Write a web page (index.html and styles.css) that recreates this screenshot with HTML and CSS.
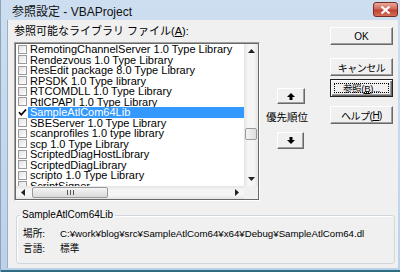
FILE: index.html
```html
<!DOCTYPE html>
<html lang="ja">
<head>
    <meta charset="UTF-8">
    <title>参照設定 - VBAProject</title>
    <link rel="stylesheet" href="styles.css">
</head>
<body>
<div class="window">
    <div class="titlebar">
        <span class="title">参照設定 - VBAProject</span>
        <span class="close">
            <svg width="11" height="8" viewBox="0 0 11 8"><path d="M1.5 0.5L9.5 7.5M9.5 0.5L1.5 7.5" stroke="#fff" stroke-width="2.2"/></svg>
        </span>
    </div>
    <div class="client">
        <div class="main">
            <div class="libs">
                <div class="caption">参照可能なライブラリ ファイル(<u>A</u>):</div>
                <div class="listbox">
                    <ul class="items">
                        <li><i class="chk"></i><span>RemotingChannelServer 1.0 Type Library</span></li>
                        <li><i class="chk"></i><span>Rendezvous 1.0 Type Library</span></li>
                        <li><i class="chk"></i><span>ResEdit package 8.0 Type Library</span></li>
                        <li><i class="chk"></i><span>RPSDK 1.0 Type library</span></li>
                        <li><i class="chk"></i><span>RTCOMDLL 1.0 Type Library</span></li>
                        <li><i class="chk"></i><span>RtlCPAPI 1.0 Type Library</span></li>
                        <li class="sel"><i class="chk on"><svg width="9" height="9" viewBox="0 0 9 9"><path d="M1 4.2L3.3 6.8L8 1.5" fill="none" stroke="#000" stroke-width="1.7"/></svg></i><span>SampleAtlCom64Lib</span></li>
                        <li><i class="chk"></i><span>SBEServer 1.0 Type Library</span></li>
                        <li><i class="chk"></i><span>scanprofiles 1.0 type library</span></li>
                        <li><i class="chk"></i><span>scp 1.0 Type Library</span></li>
                        <li><i class="chk"></i><span>ScriptedDiagHostLibrary</span></li>
                        <li><i class="chk"></i><span>ScriptedDiagLibrary</span></li>
                        <li><i class="chk"></i><span>scripto 1.0 Type Library</span></li>
                        <li><i class="chk"></i><span>ScriptSigner</span></li>
                    </ul>
                    <div class="vscroll">
                        <div class="arrow"><svg width="7" height="4" viewBox="0 0 7 4"><path d="M0 4L3.5 0L7 4Z" fill="#222"/></svg></div>
                        <div class="track"><div class="thumb"></div></div>
                        <div class="arrow"><svg width="7" height="4" viewBox="0 0 7 4"><path d="M0 0L7 0L3.5 4Z" fill="#222"/></svg></div>
                    </div>
                    <div class="hscroll">
                        <div class="arrow"><svg width="4" height="7" viewBox="0 0 4 7"><path d="M4 0L4 7L0 3.5Z" fill="#222"/></svg></div>
                        <div class="track">
                            <div class="thumb">
                                <svg width="7" height="5" viewBox="0 0 7 5"><path d="M0.5 0V5M3.5 0V5M6.5 0V5" stroke="#555" stroke-width="1"/></svg>
                            </div>
                        </div>
                        <div class="arrow"><svg width="4" height="7" viewBox="0 0 4 7"><path d="M0 0L4 3.5L0 7Z" fill="#222"/></svg></div>
                    </div>
                    <div class="corner"></div>
                </div>
            </div>
            <div class="priority">
                <div class="btn pbtn"><svg width="8" height="7" viewBox="0 0 8 7"><path d="M4 0L8 4H5.5V7H2.5V4H0Z" fill="#000"/></svg></div>
                <div class="plabel">優先順位</div>
                <div class="btn pbtn down"><svg width="8" height="7" viewBox="0 0 8 7"><path d="M4 7L8 3H5.5V0H2.5V3H0Z" fill="#000"/></svg></div>
            </div>
            <div class="buttons">
                <div class="btn cmd ok">OK</div>
                <div class="btn cmd cancel">キャンセル</div>
                <div class="btn cmd browse"><span class="focus">参照(<u>B</u>)...</span></div>
                <div class="btn cmd help">ヘルプ(<u>H</u>)</div>
            </div>
        </div>
        <fieldset class="info">
            <legend>SampleAtlCom64Lib</legend>
            <div class="row"><span class="k">場所:</span><span>C:¥work¥blog¥src¥SampleAtlCom64¥x64¥Debug¥SampleAtlCom64.dl</span></div>
            <div class="row"><span class="k">言語:</span><span>標準</span></div>
        </fieldset>
    </div>
</div>
</body>
</html>
```
FILE: styles.css
```css
*{
    box-sizing: border-box;
}
body{
    margin: 0;
    font-family: "Liberation Sans", "Noto Sans CJK JP", sans-serif;
    color: #000;
}
.window{
    width: 400px;
    height: 272px;
    overflow: hidden;
    display: flex;
    flex-direction: column;
    padding: 0 2px 4px 7px;
    border-left: 1px solid #8ea4bd;
    background: linear-gradient(#cddef0, #bcd1e9);
    box-shadow: inset 0 -2px #2c6d83;
}
.titlebar{
    height: 20px;
    flex: none;
    display: flex;
    align-items: flex-start;
}
.title{
    margin: 4px 0 0 4px;
    font-size: 12px;
    line-height: 16px;
    color: #111;
    white-space: nowrap;
}
.close{
    margin: 2px 0 0 auto;
    width: 25px;
    height: 15px;
    display: flex;
    align-items: center;
    justify-content: center;
    border: 1px solid #7a2c22;
    border-radius: 3px;
    background: linear-gradient(#e9a99c, #d0675a 45%, #c2402f 55%, #d46f58);
}
.client{
    flex: 1;
    background: #f0f0f0;
    padding: 4px 0 0 6px;
    box-shadow: -1px 0 #9bb0c6;
}
.main{
    display: flex;
    align-items: flex-start;
}
.libs{
    width: 246px;
    flex: none;
}
.caption{
    height: 14px;
    margin-bottom: 4px;
    font-size: 11px;
    line-height: 14px;
    white-space: nowrap;
}
/* 一覧: 窪んだ枠 */
.listbox{
    height: 159px;
    display: grid;
    grid-template-columns: 1fr 14px;
    grid-template-rows: 142px 13px;
    border: 1px solid;
    border-color: #a0a0a0 #fff #fff #a0a0a0;
    outline: 1px solid #696969;
    outline-offset: -2px;
    padding: 1px;
    background: #fff;
}
.items{
    list-style: none;
    margin: 0;
    padding: 0;
    overflow: hidden;
    background: #fff;
}
.items li{
    height: 10.5px;
    display: flex;
    align-items: center;
    font-size: 11px;
    line-height: 10.5px;
    white-space: nowrap;
}
.chk{
    width: 9px;
    height: 9px;
    flex: none;
    margin: 0 1px 0 2px;
    border: 1px solid #9a9a9a;
    background: linear-gradient(135deg, #e2e2e2, #fff);
    display: flex;
}
.chk.on{
    border-color: #fff;
    background: #fff;
}
.chk svg{
    margin: -1px;
}
.items li span{
    flex: 1;
    padding-left: 2px;
    height: 10.5px;
}
.items li.sel span{
    background: #3399ff;
    color: #fff;
}
.vscroll{
    display: flex;
    flex-direction: column;
    background: linear-gradient(to right, #e4e4e4, #f5f5f5 30%, #f5f5f5 70%, #e4e4e4);
}
.arrow{
    width: 14px;
    height: 14px;
    flex: none;
    display: flex;
    align-items: center;
    justify-content: center;
}
.vscroll .track{
    flex: 1;
}
.vscroll .thumb{
    margin: 70px 1px 0 1px;
    height: 12px;
    border: 1px solid #9a9a9a;
    border-radius: 2px;
    background: linear-gradient(to right, #f4f4f4, #dedede);
}
.hscroll{
    display: flex;
    background: linear-gradient(#e4e4e4, #f5f5f5 30%, #f5f5f5 70%, #e4e4e4);
}
.hscroll .arrow{
    height: 13px;
}
.hscroll .track{
    flex: 1;
    display: flex;
}
.hscroll .thumb{
    margin: 1px 0 1px 2px;
    width: 76px;
    border: 1px solid #9a9a9a;
    border-radius: 2px;
    background: linear-gradient(#f4f4f4, #dadada);
    display: flex;
    align-items: center;
    justify-content: center;
}
.corner{
    background: #f0f0f0;
}
/* ボタン */
.btn{
    display: flex;
    align-items: center;
    justify-content: center;
    background: #f0f0f0;
    border: 1px solid;
    border-color: #fff #696969 #696969 #fff;
    box-shadow: inset -1px -1px #a0a0a0;
    font-size: 10px;
    white-space: nowrap;
}
.priority{
    width: 52px;
    flex: none;
    margin-left: 6px;
    padding-top: 64px;
    display: flex;
    flex-direction: column;
    align-items: flex-start;
}
.pbtn{
    width: 28px;
    height: 16px;
    margin-left: 11px;
}
.pbtn.down{
    height: 17px;
    margin-top: 8px;
    width: 27px;
}
.plabel{
    margin-top: 6px;
    font-size: 10.5px;
    line-height: 14px;
    white-space: nowrap;
}
.buttons{
    margin-left: 12px;
    display: flex;
    flex-direction: column;
}
.cmd{
    width: 63px;
    height: 18px;
    letter-spacing: -0.5px;
}
.ok{
    margin-top: 3px;
    letter-spacing: 0;
}
.cancel{
    margin-top: 13px;
}
.browse{
    margin-top: 3px;
    border: 1px solid #222;
    box-shadow: inset 1px 1px #fff, inset -1px -1px #696969, inset -2px -2px #a0a0a0;
    padding: 3px;
    font-size: 9.5px;
    letter-spacing: -0.3px;
}
.browse .focus{
    flex: 1;
    align-self: stretch;
    display: flex;
    align-items: center;
    justify-content: center;
    border: 1px dotted #000;
}
.help{
    margin-top: 9px;
}
/* 情報欄 */
.info{
    margin: 8px 3px 0 2px;
    padding: 5px 6px 7px 6px;
    min-width: 0;
    border: 1px solid #d0d7dc;
    border-radius: 3px;
    box-shadow: inset 1px 1px #fff;
}
.info legend{
    margin-left: -3px;
    padding: 0 2px;
    font-size: 10px;
    line-height: 12px;
}
.row{
    display: flex;
    font-size: 9.7px;
    line-height: 15px;
    white-space: nowrap;
}
.row .k{
    width: 37px;
    flex: none;
}
```
